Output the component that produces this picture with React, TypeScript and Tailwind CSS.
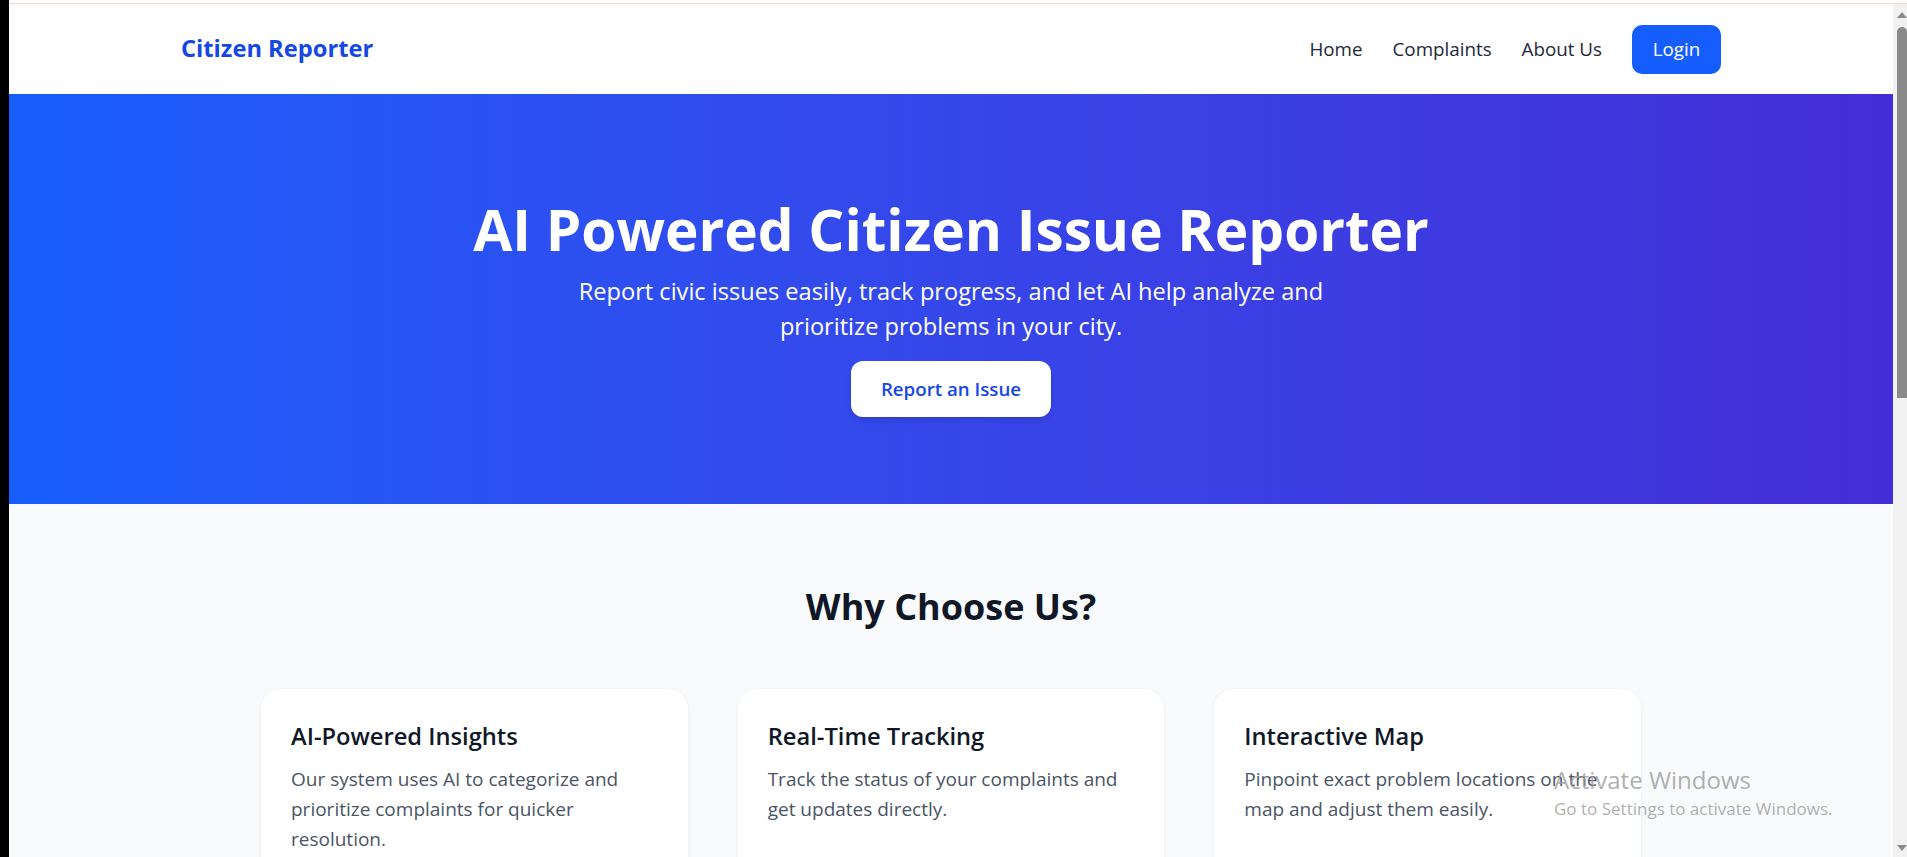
import React from "react";

const font = { fontFamily: '"Open Sans", "Noto Sans", Arial, sans-serif' };

function Card({ title, lines }: { title: string; lines: string[] }) {
  return (
    <div className="h-[300px] rounded-[20px] bg-white p-[30px] shadow-[0_1px_4px_rgba(0,0,0,0.06)]">
      <h3 className="text-[23.7px] leading-[35px] font-semibold text-[#101828]">{title}</h3>
      <p className="mt-[10px] text-[19px] leading-[30px] text-[#4a5565]">
        {lines.map((l, i) => (
          <React.Fragment key={i}>
            {l}
            {i < lines.length - 1 && <br />}
          </React.Fragment>
        ))}
      </p>
    </div>
  );
}

export default function App() {
  return (
    <div className="flex h-[857px] w-full overflow-hidden bg-white" style={font}>
      <div className="w-[9px] shrink-0 bg-black" />
      <div className="flex min-w-0 flex-1 flex-col">
        <div className="h-[4px] shrink-0 border-b border-[#f9d8cc] bg-white" />
        <div className="flex min-h-0 flex-1">
          <div className="relative min-w-0 flex-1 overflow-hidden">
            {/* Nav */}
            <nav className="h-[90px] bg-white">
              <div className="mx-auto flex h-full max-w-[1600px] items-center justify-between px-[30px]">
                <span className="text-[23.7px] font-bold text-[#1447e6]">Citizen Reporter</span>
                <div className="flex items-center gap-[30px] text-[18.8px] text-[#1e2939]">
                  <a>Home</a>
                  <a>Complaints</a>
                  <a>About Us</a>
                  <button className="h-[49px] w-[89px] rounded-[10px] bg-[#155dfc] text-[18.8px] text-white">
                    Login
                  </button>
                </div>
              </div>
            </nav>

            {/* Hero */}
            <section className="flex h-[410px] flex-col items-center bg-gradient-to-r from-[#155dfc] to-[#432dd7] pt-[105px] text-center text-white">
              <h1 className="text-[56.7px] leading-[60px] font-bold">AI Powered Citizen Issue Reporter</h1>
              <p className="mt-[15px] max-w-[840px] text-[23.6px] leading-[35px]">
                Report civic issues easily, track progress, and let AI help analyze and prioritize problems in your city.
              </p>
              <button className="mt-[17px] h-[56px] w-[200px] rounded-[12px] bg-white text-[18.7px] font-semibold text-[#1447e6] shadow-md">
                Report an Issue
              </button>
            </section>

            {/* Features */}
            <section className="bg-[#f9fafb] pt-[80px] pb-[80px]">
              <h2 className="text-center text-[36px] leading-[45px] font-bold text-[#101828]">Why Choose Us?</h2>
              <div className="mx-auto mt-[60px] grid max-w-[1440px] grid-cols-3 gap-[50px] px-[30px]">
                <Card
                  title="AI-Powered Insights"
                  lines={["Our system uses AI to categorize and", "prioritize complaints for quicker", "resolution."]}
                />
                <Card
                  title="Real-Time Tracking"
                  lines={["Track the status of your complaints and", "get updates directly."]}
                />
                <Card
                  title="Interactive Map"
                  lines={["Pinpoint exact problem locations on the", "map and adjust them easily."]}
                />
              </div>
            </section>

            {/* Windows watermark */}
            <div className="pointer-events-none absolute top-[759px] left-[1545px] text-[#9a9a9a]/80">
              <div className="text-[24px] leading-[34px]">Activate Windows</div>
              <div className="text-[17px] leading-[24px]">Go to Settings to activate Windows.</div>
            </div>
          </div>

          {/* Scrollbar */}
          <div className="relative w-[14px] shrink-0 bg-[#f1f1f1]">
            <div className="absolute top-[8px] right-0 h-0 w-0 border-r-[5px] border-b-[6px] border-l-[5px] border-r-transparent border-b-[#8a8a8a] border-l-transparent" />
            <div className="absolute top-[23px] right-0 h-[371px] w-[10px] rounded-t-[5px] bg-[#8a8a8a]" />
            <div className="absolute bottom-[6px] right-0 h-0 w-0 border-t-[6px] border-r-[5px] border-l-[5px] border-t-[#8a8a8a] border-r-transparent border-l-transparent" />
          </div>
        </div>
      </div>
    </div>
  );
}
